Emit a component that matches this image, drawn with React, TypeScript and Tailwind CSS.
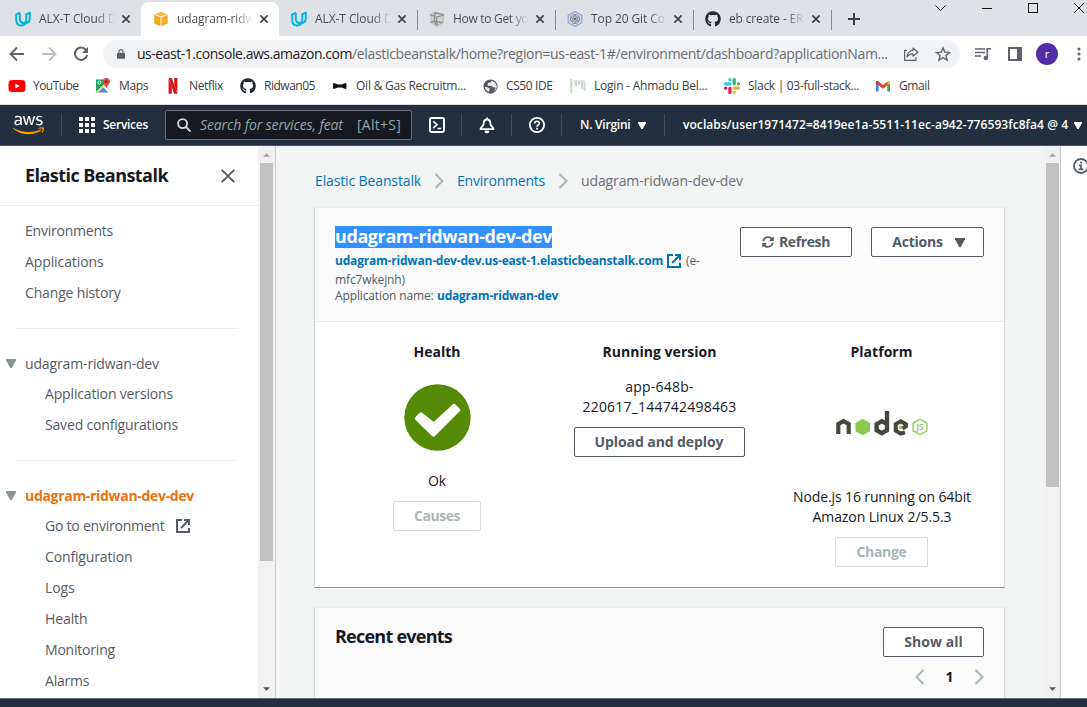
import React from "react";
import { SiNetflix } from "react-icons/si";
import { FaAws, FaGithub, FaSyncAlt, FaYoutube } from "react-icons/fa";

/* ---------- icons ---------- */

function ExternalIcon({ className }: { className?: string }) {
  return (
    <svg viewBox="0 0 14 14" className={className} width="14" height="14" fill="none" stroke="currentColor" strokeWidth="2">
      <path d="M6 1H1v12h12V9" />
      <path d="M8 1h5v5" />
      <path d="M5 9l7.5-7.5" />
    </svg>
  );
}

function Chevron({ left, size = 16 }: { left?: boolean; size?: number }) {
  return (
    <svg viewBox="0 0 10 16" width={(size * 10) / 16} height={size} fill="none" stroke="#aab7b8" strokeWidth="2" className="shrink-0">
      {left ? <path d="M8.5 1L1.5 8l7 7" /> : <path d="M1.5 1l7 7-7 7" />}
    </svg>
  );
}

function Caret({ className, w = 10, h = 9 }: { className?: string; w?: number; h?: number }) {
  return (
    <svg viewBox="0 0 10 9" preserveAspectRatio="none" width={w} height={h} className={className} fill="currentColor">
      <path d="M0 0h10v1.2L5.8 9H4.2L0 1.2z" />
    </svg>
  );
}

function UdacityIcon() {
  return (
    <svg viewBox="0 0 16 16" width="16" height="16" fill="none" stroke="#02b3e4" strokeWidth="2">
      <path d="M4.800 1.700L1.200 3.500v5.300c0 3.600 2 5.700 4.800 5.700 1.700 0 3.200-.5 4.200-1.700" />
      <path d="M4.800 1.700v5.600c0 3 1.600 5 4.600 5 3.200 0 5.400-1.700 5.400-5.400V1.900L11.300 3.300v4.600c0 2.600-1.300 4.100-3.500 4.100" />
    </svg>
  );
}

function AwsCube() {
  return (
    <svg viewBox="0 0 16 16" width="16" height="16">
      <path d="M8 1l6.5 2.2L8 5.6 1.5 3.2z" fill="#f6b93b" />
      <path d="M1.2 4l6.4 2.3v8.9L1.2 12.6z" fill="#f2a91e" />
      <path d="M14.8 4L8.4 6.3v8.9l6.4-2.6z" fill="#f0b033" />
    </svg>
  );
}

function CageIcon() {
  return (
    <svg viewBox="0 0 16 16" width="16" height="16" fill="none">
      <path d="M2 3.500l4-2L14.500 4l-.8 7.500L8 15l-5.500-3.500z" stroke="#bdbdbb" strokeWidth="1.500" fill="#d0d1d2" />
      <path d="M6 1.500L5.200 10l2.600 4.500M6 1.500l9 2.200M1 3.500l6.500 2.700L15 4M5.200 10l8.600 1.800M1.500 11.500L5.200 10M7.500 6.200l.4 8.300" stroke="#8b8b89" strokeWidth="1.200" />
    </svg>
  );
}

function HexNetIcon() {
  return (
    <svg viewBox="0 0 16 16" width="16" height="16" fill="none">
      <path d="M8 .6l6.800 3.700v7.400L8 15.400 1.200 11.700V4.300z" stroke="#8b9ad0" strokeWidth="1.100" fill="#d5dbe9" />
      <circle cx="8" cy="8" r="4.600" stroke="#7d8798" strokeWidth="1" />
      <path d="M8 3.500L4.500 10.300h7zM8 12.500L4.500 6h7z" stroke="#8791a0" strokeWidth=".9" />
      <circle cx="8" cy="8" r="1.300" fill="#606a7c" />
    </svg>
  );
}

function MapsIcon() {
  return (
    <svg viewBox="0 0 16 16" width="16" height="16">
      <path d="M1.500 1.500h13v13h-13z" fill="#e8eaed" />
      <path d="M1 1.500h9L9 8l-8 7z" fill="#1fa463" />
      <path d="M3 14.500L8.500 9l5 5.500z" fill="#4a89f3" />
      <path d="M1.500 14.500L10 6.500" stroke="#fdd651" strokeWidth="1.800" />
      <path d="M8.500 8.500l6 6" stroke="#fff" strokeWidth="1.300" />
      <circle cx="4.300" cy="4.500" r="1.500" fill="none" stroke="#fff" strokeWidth=".9" />
      <path d="M11.300 0a3.600 3.600 0 0 0-3.600 3.600c0 2.700 3 3.400 3.600 7.400.6-4 3.600-4.700 3.600-7.400A3.600 3.600 0 0 0 11.300 0z" fill="#dc4b3e" />
      <circle cx="11.300" cy="3.600" r="1.300" fill="#7e2a22" />
    </svg>
  );
}

function BowtieIcon() {
  return (
    <svg viewBox="0 0 16 16" width="16" height="16">
      <path d="M1.800 5l4.200 1.500h3.500L13.700 5c.8.5.8.8.8 3s0 2.500-.8 3L9.500 9.500H6L1.800 11C1 10.500 1 10.200 1 8s0-2.500.8-3z" fill="#111" />
    </svg>
  );
}

function GlobeIcon() {
  return (
    <svg viewBox="0 0 16 16" width="15" height="15">
      <circle cx="8" cy="8" r="7.600" fill="#55585d" />
      <path d="M9.500 1.800L8 3.500 5.500 4.200l-.8 2 1.500 1.300 3-.2 1.500 1.500h1.800c.8.500.9 1.200.5 2l-1.700 2.600c2-.9 3.300-2.900 3.300-5.200 0-2.900-2-5.500-5.100-6.400z" fill="#eceded" />
      <path d="M2 8.300l2.600.5 2.300 1.200.3 1.800-1.300 1.700C3.500 12.700 2.100 10.800 2 8.300z" fill="#eceded" />
    </svg>
  );
}

function FadedIcon() {
  return (
    <svg viewBox="0 0 16 16" width="16" height="16">
      <path d="M0 1h2v14H0z" fill="#c9e0cc" />
      <path d="M2 2h1v13H2z" fill="#e5f0e6" />
      <path d="M4 2h11v3H4z" fill="#dde0dd" />
      <path d="M5 5h2v3H5zM8 4h2v3H8z" fill="#c9cfca" />
      <path d="M11 4h2v7h-2zM13.500 4h2v9h-2z" fill="#cbd8cd" />
    </svg>
  );
}

function SlackIcon() {
  return (
    <svg viewBox="0 0 16 16" width="16" height="16">
      <g fill="#36c5f0"><rect x="0" y="4.200" width="7.500" height="3.200" rx="1.600" /><rect x="4.300" y="0" width="3.200" height="3.200" rx="1.500" /></g>
      <g fill="#2eb67d"><rect x="8.600" y="0" width="3.200" height="7.400" rx="1.600" /><rect x="12.800" y="4.200" width="3.200" height="3.200" rx="1.500" /></g>
      <g fill="#ecb22e"><rect x="8.600" y="8.500" width="7.400" height="3.200" rx="1.600" /><rect x="8.600" y="12.800" width="3.200" height="3.200" rx="1.500" /></g>
      <g fill="#e01e5a"><rect x="4.300" y="8.500" width="3.200" height="7.500" rx="1.600" /><rect x="0" y="8.500" width="3.200" height="3.200" rx="1.500" /></g>
    </svg>
  );
}

function GmailIcon() {
  return (
    <svg viewBox="0 0 16 16" width="16" height="16">
      <path d="M1 4v9.500h2.700V7L1 4z" fill="#4285f4" />
      <path d="M15 4v9.500h-2.700V7L15 4z" fill="#34a853" />
      <path d="M12.300 7.500V4l1-.9c.8-.5 1.700 0 1.700 1v1.400z" fill="#fbbc04" />
      <path d="M3.700 7.500V4l-1-.9C1.900 2.600 1 3.100 1 4.100v1.400z" fill="#c5221f" />
      <path d="M3.400 3.600L8 7.100l4.600-3.500v3.700L8 10.800 3.400 7.300z" fill="#ea4335" />
    </svg>
  );
}

function HealthOk({ className }: { className?: string }) {
  return (
    <svg viewBox="0 0 67 67" width="67" height="67" className={className}>
      <circle cx="33.500" cy="33.500" r="33.200" fill="#538c04" />
      <path d="M12.500 34.500L17 30l12.700 10.200L50 21.500l4.500 4.500-25 25z" fill="#fff" stroke="#fff" strokeWidth="3.500" strokeLinejoin="round" />
    </svg>
  );
}

function NodeLogo() {
  return (
    <svg viewBox="0 0 92 27" width="92" height="27" fill="none">
      <path d="M2.300 24V13.900L7.500 11.100 12.700 13.900V24" stroke="#46483e" strokeWidth="4.200" />
      <path d="M26.700 8.800l7.300 4.100v8.300l-7.300 4.100-7.300-4.100v-8.300z" fill="#8cc84b" />
      <path d="M51 1V20.200l-5.200 3-5.200-3v-6l5.200-3 5.200 3" stroke="#46483e" strokeWidth="4.400" />
      <path d="M69 22.400l-4.300 1.300-5-3v-6.600l5-2.900 5.200 3v2.200l-3.500 2" stroke="#46483e" strokeWidth="4" />
      <path d="M64.700 15.200l1.700 1v2l-1.700 1-1.700-1v-2z" fill="#8cc84b" />
      <path d="M84 9.300l6.900 3.900v7.700L84 24.800l-6.900-3.900v-7.700z" stroke="#8cc84b" strokeWidth="1.300" />
      <text x="84" y="20" textAnchor="middle" fontFamily="Open Sans, sans-serif" fontSize="9" fontWeight="600" fill="#8cc84b">JS</text>
    </svg>
  );
}

/* ---------- browser chrome ---------- */

const tabs = [
  { icon: <UdacityIcon />, title: "ALX-T Cloud D", track: "tracking-[-0.08px]" },
  { icon: <AwsCube />, title: "udagram-ridw", active: true, track: "tracking-[-0.12px]" },
  { icon: <UdacityIcon />, title: "ALX-T Cloud D", track: "tracking-[-0.08px]" },
  { icon: <CageIcon />, title: "How to Get yo", sep: true, track: "tracking-[-0.3px]" },
  { icon: <HexNetIcon />, title: "Top 20 Git Co", sep: true, track: "tracking-[-0.1px]" },
  { icon: <FaGithub className="size-4 text-[#24292f]" />, title: "eb create - ER", sep: true, track: "tracking-[-0.15px]" },
];

function TabStrip() {
  return (
    <div className="flex h-9 shrink-0 items-stretch bg-[#dee1e6] pl-[3px]">
      {tabs.map((t, i) => (
        <div
          key={i}
          className={`relative mt-[2px] flex w-[138px] shrink-0 items-center rounded-t-lg pl-3 ${t.active ? "bg-white" : ""}`}
        >
          {t.sep && <span className="absolute left-0 top-2 h-5 w-px bg-[#80868b]" />}
          {t.icon}
          <span
            className={`ml-2 w-[76px] whitespace-nowrap bg-linear-to-r from-[#45494d] from-75% to-transparent bg-clip-text text-xs text-transparent ${t.track}`}
          >
            {t.title}
          </span>
          <svg viewBox="0 0 8 8" width="8" height="8" className="ml-[7px]" stroke="#3c4043" strokeWidth="1.700">
            <path d="M.4.4l7.200 7.200M7.600.4L.4 7.600" />
          </svg>
        </div>
      ))}
      <div className="mt-[10px] h-5 w-px bg-[#80868b]" />
      <svg viewBox="0 0 12 12" width="12" height="12" className="mt-[13px] ml-4" stroke="#3c4043" strokeWidth="2">
        <path d="M6 0v12M0 6h12" />
      </svg>
      <svg viewBox="0 0 154 20" width="154" height="20" className="ml-[73px] shrink-0" fill="none" stroke="#111" strokeWidth="1">
        <path d="M2.500 5.500l5 5 5-5" />
        <path d="M49 8.500h10" />
        <rect x="95.500" y="3.500" width="9" height="9" />
        <path d="M141 3l10 10M151 3l-10 10" />
      </svg>
    </div>
  );
}

function Toolbar() {
  return (
    <div className="flex h-9 shrink-0 items-center bg-white pl-[9px]">
      <svg viewBox="0 0 16 16" width="16" height="16" fill="none" stroke="#5f6368" strokeWidth="1.900">
        <path d="M15 8H2M8 1.500L1.500 8 8 14.500" />
      </svg>
      <svg viewBox="0 0 16 16" width="16" height="16" className="ml-4" fill="none" stroke="#bcbfc2" strokeWidth="1.900">
        <path d="M1 8h13M8 1.500L14.500 8 8 14.500" />
      </svg>
      <svg viewBox="0 0 16 16" width="16" height="16" className="ml-4" fill="none" stroke="#5f6368" strokeWidth="2">
        <path d="M13.300 4.200A6.200 6.200 0 1 0 14.200 9" />
        <path d="M15 1v6H9z" fill="#5f6368" stroke="none" />
      </svg>
      <div className="ml-[14px] flex h-7 w-[857px] shrink-0 items-center rounded-full bg-[#f1f3f4] pl-[14px]">
        <svg viewBox="0 0 10 13" width="8" height="12" className="text-[#5f6368]">
          <path d="M2.500 5V3.500a2.500 2.500 0 0 1 5 0V5" fill="none" stroke="currentColor" strokeWidth="1.400" />
          <rect x="0" y="4.800" width="10" height="7.700" rx="1" fill="currentColor" />
        </svg>
        <span className="ml-3 w-[752px] whitespace-nowrap text-sm tracking-[-0.33px] text-[#6a6e73]">
          <span className="tracking-[-0.47px] text-[#202124]">us-east-1.console.aws.amazon.com</span>
          /elasticbeanstalk/home?region=us-east-1#/environment/dashboard?applicationNam...
        </span>
        <svg viewBox="0 0 16 16" width="16" height="16" className="ml-[14px]" fill="none" stroke="#5f6368" strokeWidth="1.200">
          <path d="M4 4.500H1.600v9.900h11.300V11" />
          <path d="M10 2l5 4.200-5 4V7.800C7.500 7.600 5.600 8.500 4 11c.3-3.800 2.500-6.300 6-6.700z" strokeLinejoin="round" />
        </svg>
        <svg viewBox="0 0 16 16" width="16" height="16" className="ml-4" fill="none" stroke="#5f6368" strokeWidth="1.400">
          <path d="M8 1.800l1.800 4.300 4.700.4-3.600 3 1.100 4.600L8 11.700l-4 2.400 1.100-4.600-3.600-3 4.700-.4z" />
        </svg>
      </div>
      <svg viewBox="0 0 16 14" width="16" height="14" className="ml-[15px]" fill="none" stroke="#5f6368" strokeWidth="1.600">
        <path d="M0 2h10M0 5.500h10M0 9h6M12.300 11V1.800H16" />
        <circle cx="10.800" cy="11" r="2.300" fill="#5f6368" stroke="none" />
      </svg>
      <svg viewBox="0 0 14 14" width="14" height="14" className="ml-[17px]">
        <path d="M0 0h14v14H0zM2 2v10h7V2z" fill="#5f6368" fillRule="evenodd" />
      </svg>
      <span className="ml-[14px] flex size-[22px] items-center justify-center rounded-full bg-[#512da8] text-[11px] text-white">r</span>
      <svg viewBox="0 0 4 14" width="4" height="14" className="ml-[19px]" fill="#5f6368">
        <circle cx="2" cy="2" r="1.600" /><circle cx="2" cy="7" r="1.600" /><circle cx="2" cy="12" r="1.600" />
      </svg>
    </div>
  );
}

const bookmarks = [
  { w: "w-[86px]", t: "tracking-[-0.55px]", icon: <FaYoutube className="size-[18px] shrink-0 text-[#f00]" />, label: "YouTube" },
  { w: "w-[70px]", t: "tracking-[-0.35px]", icon: <MapsIcon />, label: "Maps" },
  { w: "w-[75px]", t: "tracking-[-0.35px]", icon: <SiNetflix className="size-4 text-[#d9101c]" />, label: "Netflix" },
  { w: "w-[92px]", t: "tracking-[-0.48px]", icon: <FaGithub className="size-4 text-[#24292f]" />, label: "Ridwan05" },
  { w: "w-[150px]", t: "tracking-[-0.22px]", icon: <BowtieIcon />, label: "Oil & Gas Recruitm..." },
  { w: "w-[88px]", t: "tracking-[-0.4px]", icon: <GlobeIcon />, label: "CS50 IDE" },
  { w: "w-[154px]", t: "tracking-[-0.22px]", icon: <FadedIcon />, label: "Login - Ahmadu Bel..." },
  { w: "w-[151px]", t: "tracking-[-0.3px]", icon: <SlackIcon />, label: "Slack | 03-full-stack..." },
  { w: "w-[80px]", t: "tracking-[-0.41px]", icon: <GmailIcon />, label: "Gmail" },
];

function Bookmarks() {
  return (
    <div className="flex h-[33px] shrink-0 items-center border-b border-[#dadce0] bg-white pb-1 pl-[9px]">
      {bookmarks.map((b) => (
        <div key={b.label} className={`flex shrink-0 items-center ${b.w}`}>
          <span className="flex w-4 shrink-0 justify-center">{b.icon}</span>
          <span className={`ml-2 whitespace-nowrap text-xs text-[#3c4043] ${b.t}`}>{b.label}</span>
        </div>
      ))}
    </div>
  );
}

/* ---------- AWS navigation ---------- */

function NavSep() {
  return <span className="h-[22px] w-px shrink-0 bg-[#414d5c]" />;
}

function AwsNav() {
  return (
    <div className="flex h-[41px] shrink-0 items-center border-b border-[#4f4b63] bg-[#232f3e] text-xs font-semibold whitespace-nowrap text-white">
      <svg width="0" height="0" className="absolute">
        <linearGradient id="awsFill" x1="0" y1="0" x2="0" y2="1">
          <stop offset="0.58" stopColor="#fff" />
          <stop offset="0.58" stopColor="#f90" />
        </linearGradient>
      </svg>
      <FaAws fill="url(#awsFill)" className="ml-[13px] h-[26px] w-[31px] shrink-0" />
      <span className="w-[17px] shrink-0" />
      <NavSep />
      <svg viewBox="0 0 16 16" width="16" height="16" className="ml-[17px] shrink-0" fill="#fff">
        {[0, 6, 12].map((y) => [0, 6, 12].map((x) => <rect key={`${x}-${y}`} x={x} y={y} width="4" height="4" />))}
      </svg>
      <span className="ml-2 w-[62px] shrink-0 tracking-[-0.27px]">Services</span>
      <div className="flex h-[30px] w-[247px] shrink-0 items-center rounded-[2px] border border-[#687078] bg-[#16191f] pl-[11px] text-sm font-normal text-[#95a5a6]">
        <svg viewBox="0 0 14 14" width="14" height="14" fill="none" stroke="#d5dbdb" strokeWidth="1.900">
          <circle cx="5.600" cy="5.600" r="4.500" /><path d="M9 9l4.500 4.500" />
        </svg>
        <span className="ml-[9px] w-[144px] italic tracking-[-0.12px]">Search for services, feat</span>
        <span className="ml-[13px] tracking-[0.25px]">[Alt+S]</span>
      </div>
      <svg viewBox="0 0 16 16" width="16" height="16" className="ml-[17px] shrink-0" fill="none" stroke="#fff" strokeWidth="1.900">
        <rect x="1" y="1" width="14" height="14" rx="1.500" />
        <path d="M4.300 4.300L8 7.700l-3.700 3.500M8.500 11.500h3.700" strokeWidth="1.600" />
      </svg>
      <span className="w-4 shrink-0" />
      <NavSep />
      <svg viewBox="0 0 16 17" width="16" height="17" className="ml-[17px] shrink-0" fill="none" stroke="#fff" strokeWidth="1.800" strokeLinejoin="round">
        <path d="M8 2.500C5.200 2.500 4.600 4.600 4.600 7 4.600 8.800 1.500 10.500 1.500 12.200h13C14.500 10.500 11.400 8.800 11.400 7c0-2.400-.6-4.500-3.400-4.500zM8 .5v2" />
        <path d="M6.500 14.500c.4 1.200 2.600 1.200 3 0z" fill="#fff" />
      </svg>
      <span className="w-4 shrink-0" />
      <NavSep />
      <svg viewBox="0 0 16 16" width="16" height="16" className="ml-[17px] shrink-0" fill="none" stroke="#fff" strokeWidth="1.800">
        <circle cx="8" cy="8" r="7.100" />
        <path d="M5.700 6.500c0-3 4.700-2.900 4.700-.2 0 1.600-2.400 1.500-2.400 3.500M8 10.700v1.800" strokeWidth="1.700" />
      </svg>
      <span className="w-4 shrink-0" />
      <NavSep />
      <span className="ml-[18px] w-[51px] shrink-0 tracking-[-0.23px]">N. Virgini</span>
      <Caret w={8} h={7} className="ml-[7px] shrink-0" />
      <span className="w-[18px] shrink-0" />
      <NavSep />
      <span className="ml-[18px] w-[385px] shrink-0 tracking-[0.07px]">voclabs/user1971472=8419ee1a-5511-11ec-a942-776593fc8fa4 @ 4</span>
      <Caret w={8} h={7} className="ml-[6px] shrink-0" />
    </div>
  );
}

/* ---------- shared ---------- */

function Scrollbar({ thumb, edge }: { thumb: string; edge: string }) {
  return (
    <div className={`flex shrink-0 flex-col items-center bg-[#f1f1f1] ${edge}`}>
      <svg viewBox="0 0 8 4" width="7" height="4" className="mt-[7px] shrink-0" fill="#a3a3a3"><path d="M0 4l4-4 4 4z" /></svg>
      <div className={`mt-[6px] w-[13px] bg-[#c1c1c1] ${thumb}`} />
      <svg viewBox="0 0 8 4" width="7" height="4" className="mt-auto mb-[7px] shrink-0" fill="#505050"><path d="M0 0l4 4 4-4z" /></svg>
    </div>
  );
}

function Button({ children, disabled, className = "" }: { children: React.ReactNode; disabled?: boolean; className?: string }) {
  return (
    <button
      className={`flex h-[30px] shrink-0 items-center justify-center rounded-[2px] border bg-white text-sm font-bold whitespace-nowrap ${
        disabled ? "border-[#d5dbdb] text-[#aab7b8]" : "border-[#545b64] text-[#545b64]"
      } ${className}`}
    >
      {children}
    </button>
  );
}

/* ---------- sidebar ---------- */

function NavItem({ label, track, className = "h-[31px]", indent, children }: { label: string; track: string; className?: string; indent?: boolean; children?: React.ReactNode }) {
  return (
    <li className={`flex items-center whitespace-nowrap text-sm text-[#545b64] ${indent ? "pl-[45px]" : "pl-[25px]"} ${className}`}>
      <span className={track}>{label}</span>
      {children}
    </li>
  );
}

function Sidebar() {
  return (
    <aside className="flex w-[276px] shrink-0 overflow-hidden border-r border-[#c8cccc] bg-white">
      <nav className="flex w-[258px] shrink-0 flex-col">
        <div className="flex h-[60px] shrink-0 items-center border-b border-[#eaeded] pl-[25px]">
          <h2 className="w-[196px] pb-[2px] text-lg font-bold tracking-[-0.55px] whitespace-nowrap text-[#16191f]">Elastic Beanstalk</h2>
          <svg viewBox="0 0 14 14" width="14" height="14" stroke="#545b64" strokeWidth="1.900"><path d="M.8.800l12.400 12.400M13.200.800L.8 13.200" /></svg>
        </div>
        <ul className="mt-[9px]">
          <NavItem label="Environments" track="tracking-[-0.22px]" />
          <NavItem label="Applications" track="tracking-[-0.1px]" />
          <NavItem label="Change history" track="tracking-[-0.16px]" />
        </ul>
        <hr className="mx-[15px] mt-5 w-[223px] border-[#eaeded]" />
        <ul className="mt-[19px]">
          <li className="flex h-[31px] items-center text-sm whitespace-nowrap text-[#545b64]">
            <Caret className="mr-[9px] ml-[6px] text-[#879596]" />
            <span className="tracking-[-0.14px]">udagram-ridwan-dev</span>
          </li>
          <NavItem indent label="Application versions" track="tracking-[-0.16px]" className="h-[30px]" />
          <NavItem indent label="Saved configurations" track="tracking-[-0.17px]" />
        </ul>
        <hr className="mx-[15px] mt-5 w-[223px] border-[#eaeded]" />
        <ul className="mt-[19px]">
          <li className="flex h-[31px] items-center text-sm font-bold whitespace-nowrap text-[#ec7211]">
            <Caret className="mr-[9px] ml-[6px] text-[#879596]" />
            <span className="tracking-[-0.31px]">udagram-ridwan-dev-dev</span>
          </li>
          <NavItem indent label="Go to environment" track="tracking-[-0.23px]" className="h-[30px]">
            <ExternalIcon className="ml-[12px]" />
          </NavItem>
          <NavItem indent label="Configuration" track="tracking-[-0.14px]" />
          <NavItem indent label="Logs" track="tracking-[-0.1px]" />
          <NavItem indent label="Health" track="tracking-[-0.1px]" />
          <NavItem indent label="Monitoring" track="tracking-[-0.2px]" />
          <NavItem indent label="Alarms" track="tracking-[-0.2px]" />
        </ul>
      </nav>
      <Scrollbar edge="w-[17px]" thumb="h-[398px]" />
    </aside>
  );
}

/* ---------- main ---------- */

function Panel({ children, className = "" }: { children: React.ReactNode; className?: string }) {
  return (
    <section className={`w-[691px] shrink-0 border border-[#d5dbdb] border-t-[#eaeded] ${className}`}>{children}</section>
  );
}

function Column({ title, track, children }: { title: string; track: string; children: React.ReactNode }) {
  return (
    <div className="flex w-[222px] flex-col items-center text-sm leading-5 whitespace-nowrap text-[#16191f]">
      <h3 className={`font-bold ${track}`}>{title}</h3>
      {children}
    </div>
  );
}

function Main() {
  return (
    <main className="flex min-w-0 flex-1 overflow-hidden bg-[#f2f3f3]">
      <div className="flex w-[768px] shrink-0 flex-col pl-[38px]">
        <div className="mt-6 flex h-[22px] shrink-0 items-center text-sm whitespace-nowrap text-[#0073bb]">
          <span className="ml-px w-[119px] tracking-[-0.13px]">Elastic Beanstalk</span>
          <Chevron />
          <span className="ml-[13px] w-[101px] tracking-[-0.22px]">Environments</span>
          <Chevron />
          <span className="ml-[13px] tracking-[-0.11px] text-[#687078]">udagram-ridwan-dev-dev</span>
        </div>

        <Panel className="mt-[15px] flex h-[381px] flex-col border-b-[#879596] bg-white">
          <div className="flex h-[114px] shrink-0 items-start border-b border-[#eaeded] bg-[#fafafa] pl-5">
            <div className="w-[405px] text-xs leading-[18px] text-[#545b64]">
              <h1 className="mt-[18px] flex">
                <span className="bg-[#3390ff] text-lg leading-[20px] font-bold tracking-[-0.41px] whitespace-nowrap text-white pb-[2px]">udagram-ridwan-dev-dev</span>
              </h1>
              <div className="mt-1 flex items-center whitespace-nowrap">
                <span className="w-[332px] font-bold tracking-[-0.2px] text-[#0073bb]">udagram-ridwan-dev-dev.us-east-1.elasticbeanstalk.com</span>
                <ExternalIcon className="text-[#0073bb]" />
                <span className="ml-[5px] tracking-[-0.13px]">(e-</span>
              </div>
              <div className="leading-[20px] tracking-[-0.13px]">mfc7wkejnh)</div>
              <div className="flex leading-[11px] whitespace-nowrap">
                <span className="w-[102px] tracking-[-0.13px]">Application name:</span>
                <span className="font-bold tracking-[-0.23px] text-[#0073bb]">udagram-ridwan-dev</span>
              </div>
            </div>
            <Button className="mt-[19px] w-[112px] gap-[5px] tracking-[-0.39px]">
              <FaSyncAlt className="size-[12px]" />
              <span>Refresh</span>
            </Button>
            <Button className="mt-[19px] ml-[19px] w-[113px] gap-[12px] pl-[2px] tracking-[-0.22px]">
              <span>Actions</span>
              <Caret />
            </Button>
          </div>
          <div className="flex pt-[20px] pl-[11px]">
            <Column title="Health" track="tracking-normal">
              <HealthOk className="mt-[22px]" />
              <div className="mt-5">Ok</div>
              <Button disabled className="mt-[10px] w-[88px] tracking-[-0.46px]">Causes</Button>
            </Column>
            <Column title="Running version" track="tracking-[0.03px] pl-px">
              <div className="mt-[15px] pl-px text-center tracking-[0.2px]">
                app-648b-
                <br />
                220617_144742498463
              </div>
              <Button className="mt-[10px] w-[171px] tracking-[-0.08px]">Upload and deploy</Button>
            </Column>
            <Column title="Platform" track="tracking-[0.03px] pl-px">
              <div className="mt-[48px] h-[27px] pl-px"><NodeLogo /></div>
              <div className="mt-[50px] pl-[2px] text-center">
                <span className="tracking-[-0.12px]">Node.js 16 running on 64bit</span>
                <br />
                <span className="tracking-[-0.06px]">Amazon Linux 2/5.5.3</span>
              </div>
              <Button disabled className="mt-[10px] w-[93px] pl-px tracking-[-0.3px]">Change</Button>
            </Column>
          </div>
        </Panel>

        <Panel className="mt-[19px] flex h-[110px] justify-between bg-[#fafafa] pr-5 pl-5">
          <h2 className="mt-[15px] text-lg leading-[26px] font-bold tracking-[-0.76px] text-[#16191f]">Recent events</h2>
          <div className="mt-[19px] flex flex-col items-end">
            <Button className="w-[101px] tracking-[0.04px]">Show all</Button>
            <div className="mt-[12px] flex items-center text-sm leading-4 font-bold text-[#16191f]">
              <Chevron left />
              <span className="w-[49px] text-center">1</span>
              <Chevron />
            </div>
          </div>
        </Panel>
      </div>
      <Scrollbar edge="w-[17px] border-r border-[#c8cccc]" thumb="h-[324px]" />
      <div className="flex flex-1 overflow-hidden bg-white">
        <svg viewBox="0 0 16 16" width="16" height="16" className="mt-3 ml-3 shrink-0" fill="none" stroke="#545b64" strokeWidth="1.800">
          <circle cx="8" cy="8" r="7" />
          <path d="M6 7.300h2v4M5.700 11.300h4.600M7 4.500h2" strokeWidth="1.700" />
        </svg>
      </div>
    </main>
  );
}

export default function App() {
  return (
    <div className="flex h-[707px] w-[1087px] flex-col overflow-hidden bg-white font-['Open_Sans','Noto_Sans',sans-serif]">
      <TabStrip />
      <Toolbar />
      <Bookmarks />
      <AwsNav />
      <div className="flex h-[552px] shrink-0 overflow-hidden">
        <Sidebar />
        <Main />
      </div>
      <div className="h-[9px] shrink-0 border-t border-[#687078] bg-[#232f3e]" />
    </div>
  );
}
